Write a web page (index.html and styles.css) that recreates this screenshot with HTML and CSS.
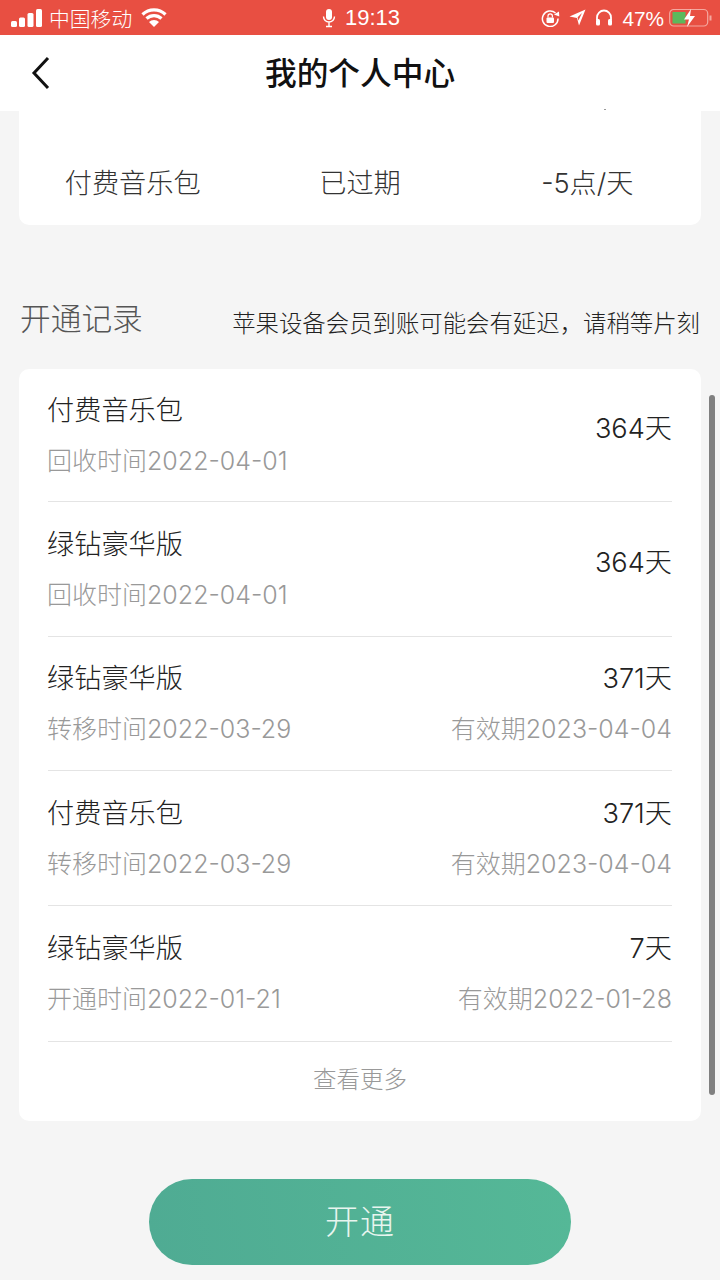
FILE: index.html
```html
<!DOCTYPE html>
<html lang="zh-CN">
<head>
    <meta charset="UTF-8">
    <meta name="viewport" content="width=device-width, initial-scale=1.0">
    <title>我的个人中心</title>
    <link rel="stylesheet" href="styles.css">
</head>
<body>
    <!-- Status bar -->
    <div class="status-bar">
        <div class="status-left">
            <svg class="signal" width="31" height="18" viewBox="0 0 31 18"><rect x="0" y="12" width="6" height="6" rx="1.500"/><rect x="8" y="8.500" width="6" height="9.500" rx="1.500"/><rect x="16.500" y="4" width="6" height="14" rx="1.500"/><rect x="25" y="0" width="6" height="18" rx="1.500"/></svg>
            <span class="carrier">中国移动</span>
            <svg class="wifi" width="26" height="19" viewBox="0 0 26 19"><path d="M1.500 6.500a16.500 16.500 0 0 1 23 0M5.500 10.500a11 11 0 0 1 15 0" fill="none" stroke="#fff" stroke-width="3.200"/><path d="M13 19l-5-5a7 7 0 0 1 10 0z" fill="#fff"/></svg>
        </div>
        <div class="status-center">
            <svg width="14" height="20" viewBox="0 0 14 20"><rect x="4" y="1" width="6" height="11" rx="3" fill="#fff"/><path d="M1.500 8.500a5.500 5.500 0 0 0 11 0M7 14v4M4 18.500h6" fill="none" stroke="#fff" stroke-width="1.400"/></svg>
            <span class="time">19:13</span>
        </div>
        <div class="status-right">
            <svg class="ic-lock" width="19" height="18" viewBox="0 0 19 18"><path d="M17 9.500a7.800 7.800 0 1 1-2.500-5.500" fill="none" stroke="#fff" stroke-width="1.500"/><path d="M13 5.500l5-3 .3 5z" fill="#fff"/><rect x="5.500" y="8.500" width="7.500" height="5.500" rx="1" fill="#fff"/><path d="M7 8.500V7a2.200 2.200 0 0 1 4.400 0v1.500" fill="none" stroke="#fff" stroke-width="1.200"/></svg>
            <svg class="ic-loc" width="17" height="17" viewBox="0 0 17 17"><path d="M16.500 .5L10 16.500 8 9 .5 7.500z M13 4L8.600 8.200l.8 3.300z" fill="#fff" fill-rule="evenodd"/></svg>
            <svg class="ic-phones" width="18" height="17" viewBox="0 0 18 17"><path d="M2 11V8.500a7 7 0 0 1 14 0V11" fill="none" stroke="#fff" stroke-width="1.800"/><rect x="1" y="10" width="4" height="6.500" rx="1.500" fill="#fff"/><rect x="13" y="10" width="4" height="6.500" rx="1.500" fill="#fff"/></svg>
            <span class="battery-pct">47%</span>
            <svg class="ic-battery" width="43" height="20" viewBox="0 0 43 20"><rect x=".7" y="1.500" width="38" height="16.500" rx="4" fill="none" stroke="#f4a89f" stroke-width="1.200"/><path d="M3.500 4h13v11.500h-13z" fill="#5cb85c"/><path d="M41.500 7.500v5" stroke="#f4a89f" stroke-width="2"/><path d="M22 1l-7 10.500h5l-2 7.500 8-11h-5z" fill="#fff"/></svg>
        </div>
    </div>

    <!-- Nav -->
    <div class="nav">
        <svg class="back" width="20" height="34" viewBox="0 0 20 34"><path d="M17 2L3 17l14 15" fill="none" stroke="#111" stroke-width="3"/></svg>
        <h1>我的个人中心</h1>
    </div>

    <div class="content">
        <div class="card top-card">
            <span>付费音乐包</span>
            <span>已过期</span>
            <span>-5点/天</span>
            <i class="speck"></i>
        </div>

        <div class="section-head">
            <h2>开通记录</h2>
            <p>苹果设备会员到账可能会有延迟，请稍等片刻</p>
        </div>

        <div class="card records">
            <div class="record">
                <div class="col">
                    <div class="name">付费音乐包</div>
                    <div class="sub">回收时间2022-04-01</div>
                </div>
                <div class="days">364天</div>
            </div>
            <div class="record">
                <div class="col">
                    <div class="name">绿钻豪华版</div>
                    <div class="sub">回收时间2022-04-01</div>
                </div>
                <div class="days">364天</div>
            </div>
            <div class="record">
                <div class="col">
                    <div class="name">绿钻豪华版</div>
                    <div class="sub">转移时间2022-03-29</div>
                </div>
                <div class="col right">
                    <div class="name">371天</div>
                    <div class="sub">有效期2023-04-04</div>
                </div>
            </div>
            <div class="record">
                <div class="col">
                    <div class="name">付费音乐包</div>
                    <div class="sub">转移时间2022-03-29</div>
                </div>
                <div class="col right">
                    <div class="name">371天</div>
                    <div class="sub">有效期2023-04-04</div>
                </div>
            </div>
            <div class="record">
                <div class="col">
                    <div class="name">绿钻豪华版</div>
                    <div class="sub">开通时间2022-01-21</div>
                </div>
                <div class="col right">
                    <div class="name">7天</div>
                    <div class="sub">有效期2022-01-28</div>
                </div>
            </div>
            <div class="more">查看更多</div>
        </div>

        <button class="open-btn" type="button">开通</button>
    </div>

    <div class="scrollbar"></div>
</body>
</html>
```

FILE: styles.css
```css
html, body {
    margin: 0;
    padding: 0;
}
body {
    width: 720px;
    height: 1280px;
    overflow: hidden;
    background-color: #f5f5f5;
    font-family: Inter, "Noto Sans CJK SC", sans-serif;
    font-weight: 300;
    color: #222;
    position: relative;
}
.status-bar {
    height: 35px;
    background-color: #e84f42;
    color: #fff;
    display: flex;
    align-items: center;
    justify-content: space-between;
    position: relative;
    padding: 0 8px 0 11px;
    box-sizing: border-box;
}
.status-left, .status-right, .status-center {
    display: flex;
    align-items: center;
}
.signal {
    fill: #fff;
}
.carrier {
    font-size: 20.800px;
    margin: 0 9px 0 7px;
}
.status-center {
    position: absolute;
    left: 322px;
    top: 0;
    height: 35px;
    gap: 9px;
}
.time {
    font-family: "Liberation Sans", sans-serif;
    font-size: 22px;
}
.status-right {
    gap: 0;
}
.ic-loc {
    margin-left: 9px;
}
.ic-phones {
    margin-left: 9px;
}
.battery-pct {
    font-family: "Liberation Sans", sans-serif;
    font-size: 20.800px;
    margin: 0 5px 0 9px;
    padding-top: 2px;
}
.nav {
    height: 76px;
    background: #fff;
    display: flex;
    align-items: center;
    justify-content: center;
    position: relative;
    padding-bottom: 4px;
    box-sizing: border-box;
}
.back {
    position: absolute;
    left: 31px;
    top: 21px;
}
h1 {
    margin: 0;
    font-size: 31.700px;
    font-weight: 500;
    color: #111;
}
.content {
    padding: 0 19px;
}
.card {
    background: #fff;
    border-radius: 10px;
}
.top-card {
    height: 114px;
    border-radius: 0 0 10px 10px;
    display: grid;
    grid-template-columns: 1fr 1fr 1fr;
    box-sizing: border-box;
    padding-top: 43px;
    font-size: 27.200px;
    line-height: 60px;
    text-align: center;
    color: #333;
    position: relative;
}
.speck {
    position: absolute;
    left: 585px;
    top: -2px;
    width: 2px;
    height: 1px;
    background: #999;
}
.section-head {
    display: flex;
    justify-content: space-between;
    align-items: flex-end;
    margin-top: 71px;
    height: 46px;
    padding: 0 1px;
}
h2 {
    margin: 0;
    font-size: 30.700px;
    font-weight: 300;
    color: #555;
    line-height: 46px;
}
.section-head p {
    margin: 0 0 1px -1px;
    font-size: 23.400px;
    line-height: 34px;
    color: #222;
}
.records {
    margin-top: 27px;
    height: 752px;
    padding: 0 29px;
    box-sizing: border-box;
}
.record {
    height: 134.500px;
    box-sizing: border-box;
    border-bottom: 1px solid #e4e4e4;
    display: flex;
    justify-content: space-between;
    align-items: center;
}
.record:first-child {
    height: 133px;
}
.record:nth-child(5) {
    height: 136px;
}
.col {
    margin-left: -1px;
}
.col.right {
    text-align: right;
}
.name {
    font-size: 27.200px;
    line-height: 40px;
    color: #222;
}
.sub {
    font-size: 25px;
    line-height: 36px;
    margin-top: 12px;
    color: #999;
}
.days {
    font-size: 27.200px;
    color: #222;
    margin-bottom: 18px;
}
.more {
    text-align: center;
    font-size: 23.500px;
    line-height: 76px;
    color: #999;
}
.open-btn {
    display: block;
    width: 422px;
    height: 86px;
    margin: 58px auto 0;
    padding: 0 0 6px;
    border: none;
    border-radius: 43px;
    background: linear-gradient(80deg, #4fab93, #55b897);
    color: #e8f5ef;
    font-family: inherit;
    font-weight: 300;
    font-size: 34px;
    letter-spacing: 1px;
}
.scrollbar {
    position: absolute;
    left: 709px;
    top: 395px;
    width: 6px;
    height: 700px;
    border-radius: 3px;
    background: #808080;
}
```
